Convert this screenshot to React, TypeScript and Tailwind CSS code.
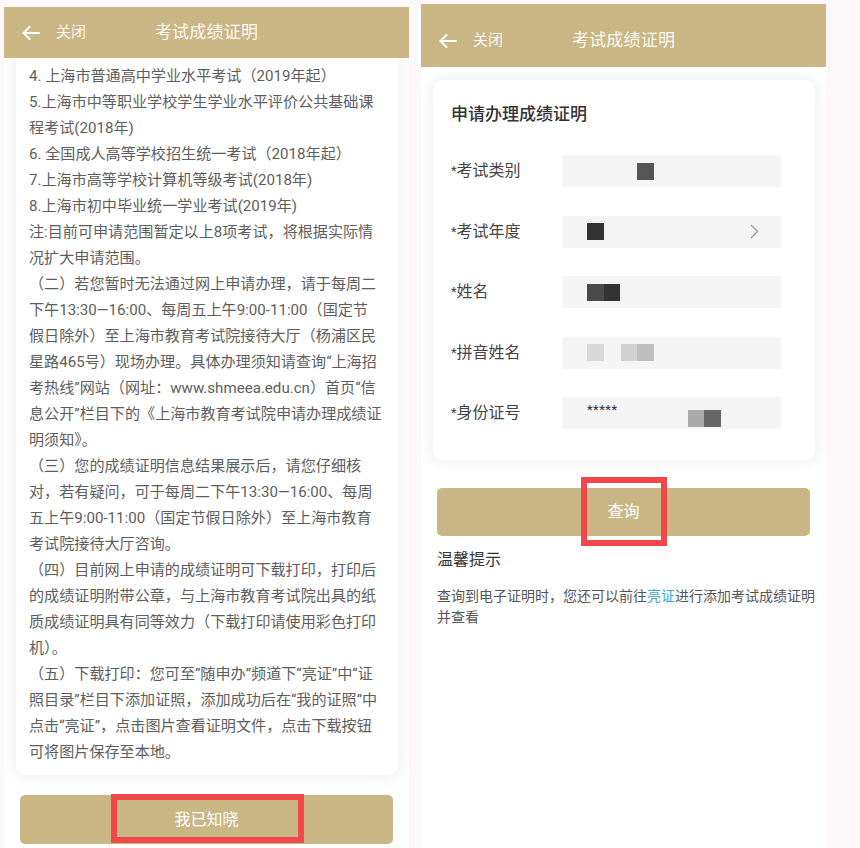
import React from "react";

const leftLines: string[] = [
  "4. 上海市普通高中学业水平考试（2019年起）",
  "5.上海市中等职业学校学生学业水平评价公共基础课",
  "程考试(2018年)",
  "6. 全国成人高等学校招生统一考试（2018年起）",
  "7.上海市高等学校计算机等级考试(2018年)",
  "8.上海市初中毕业统一学业考试(2019年)",
  "注:目前可申请范围暂定以上8项考试，将根据实际情",
  "况扩大申请范围。",
  "（二）若您暂时无法通过网上申请办理，请于每周二",
  "下午13:30—16:00、每周五上午9:00-11:00（国定节",
  "假日除外）至上海市教育考试院接待大厅（杨浦区民",
  "星路465号）现场办理。具体办理须知请查询“上海招",
  "考热线”网站（网址：www.shmeea.edu.cn）首页“信",
  "息公开”栏目下的《上海市教育考试院申请办理成绩证",
  "明须知》。",
  "（三）您的成绩证明信息结果展示后，请您仔细核",
  "对，若有疑问，可于每周二下午13:30—16:00、每周",
  "五上午9:00-11:00（国定节假日除外）至上海市教育",
  "考试院接待大厅咨询。",
  "（四）目前网上申请的成绩证明可下载打印，打印后",
  "的成绩证明附带公章，与上海市教育考试院出具的纸",
  "质成绩证明具有同等效力（下载打印请使用彩色打印",
  "机）。",
  "（五）下载打印：您可至“随申办”频道下“亮证”中“证",
  "照目录”栏目下添加证照，添加成功后在“我的证照”中",
  "点击“亮证”，点击图片查看证明文件，点击下载按钮",
  "可将图片保存至本地。",
];

function BackArrow() {
  return (
    <svg width="18" height="14" viewBox="0 0 18 14" fill="none" stroke="white" strokeWidth="2" strokeLinecap="round" strokeLinejoin="round">
      <path d="M17 7H1.5" />
      <path d="M7.5 1L1.5 7l6 6" />
    </svg>
  );
}

function Header({ tall }: { tall?: boolean }) {
  return (
    <div
      className={
        "relative z-10 grid grid-cols-[1fr_auto_1fr] items-center px-[18px] bg-[#cbb686] text-white " +
        (tall ? "h-[63px] pt-[10px]" : "h-[51px]")
      }
    >
      <div className="flex items-center gap-[16px]">
        <BackArrow />
        <span className="text-[15px] leading-none opacity-90">关闭</span>
      </div>
      <div className="text-[17px] leading-none tracking-[0.2px] text-white/95">考试成绩证明</div>
      <div />
    </div>
  );
}

function Sq({ c, w = 17 }: { c: string; w?: number }) {
  return <div className={"h-[17px] " + c} style={{ width: w }} />;
}

function Row({ label, children, alignStart }: { label: string; children?: React.ReactNode; alignStart?: boolean }) {
  return (
    <div className="h-[60.5px] flex items-center">
      <div className="w-[111px] text-[16px] text-[#444] leading-none whitespace-nowrap">
        <span className="text-[13px] align-top relative top-[1px]">*</span>
        {label}
      </div>
      <div
        className={
          "w-[219px] h-[32px] bg-[#f5f5f5] flex pl-[25px] pr-[22px] " +
          (alignStart ? "items-start" : "items-center")
        }
      >
        {children}
      </div>
    </div>
  );
}

export default function App() {
  return (
    <div className="w-[860px] h-[848px] overflow-hidden bg-[#fdf9fa] flex items-start font-['Roboto','Noto_Sans_CJK_SC',sans-serif]">
      {/* Left phone */}
      <div className="ml-[4px] mt-[7px] w-[405px] h-[841px] bg-white flex flex-col">
        <Header />
        <div className="ml-3 mr-[11px] bg-white rounded-b-[10px] shadow-[0_0_14px_4px_rgba(0,0,0,0.05)] pt-[5px] pb-[10px] pl-[13px] text-[15.1px] leading-[26px] text-[#5e5e5e]">
          {leftLines.map((l, i) => (
            <div key={i} className="whitespace-nowrap">
              {l}
            </div>
          ))}
        </div>
        <div className="relative mt-[20px] mx-4 h-[49px] rounded-[5px] bg-[#cbb686] flex items-center justify-center text-white text-[16px]">
          我已知晓
          <div className="absolute left-[91px] top-[-1px] w-[193px] h-[49px] border-[6px] border-[#f2474b]" />
        </div>
      </div>

      {/* Right phone */}
      <div className="ml-[12px] mt-[4px] w-[405px] h-[844px] bg-white flex flex-col">
        <Header tall />
        <div className="mt-[13px] ml-3 mr-[11px] bg-white rounded-[10px] shadow-[0_0_14px_4px_rgba(0,0,0,0.05)] pt-[22px] pb-[16.5px] px-[18px]">
          <div className="text-[17px] leading-[24px] font-medium text-[#333] mb-[15px]">申请办理成绩证明</div>
          <Row label="考试类别">
            <div className="ml-[50px]">
              <Sq c="bg-[#555]" />
            </div>
          </Row>
          <Row label="考试年度">
            <Sq c="bg-[#333]" />
            <div className="flex-1" />
            <svg width="9" height="15" viewBox="0 0 9 15" fill="none" stroke="#9a9a9a" strokeWidth="1.3" strokeLinecap="round" strokeLinejoin="round">
              <path d="M1.5 1.5l6 6-6 6" />
            </svg>
          </Row>
          <Row label="姓名">
            <Sq c="bg-[#4a4a4a]" />
            <Sq c="bg-[#333]" w={16} />
          </Row>
          <Row label="拼音姓名">
            <Sq c="bg-[#d9d9d9]" />
            <div className="w-[17px]" />
            <Sq c="bg-[#d2d2d2]" w={16} />
            <Sq c="bg-[#bebebe]" />
          </Row>
          <Row label="身份证号" alignStart>
            <span className="inline-block w-[101px] mt-[6px] text-[13px] leading-[14px] text-[#333] tracking-[0.5px]">*****</span>
            <div className="mt-[13px] flex">
              <Sq c="bg-[#ababab]" w={16} />
              <Sq c="bg-[#666]" />
            </div>
          </Row>
        </div>
        <div className="relative mt-[28px] mx-4 h-[48px] rounded-[5px] bg-[#cbb686] flex items-center justify-center text-white text-[16px]">
          查询
          <div className="absolute left-[144px] top-[-11px] w-[86px] h-[69px] border-[6px] border-[#f2474b]" />
        </div>
        <div className="mx-4 mt-[12px] text-[16px] leading-[24px] text-[#333]">温馨提示</div>
        <div className="mx-4 mt-[13.5px] text-[14px] leading-[21px] text-[#555] whitespace-nowrap">
          查询到电子证明时，您还可以前往<span className="text-[#3fa6d2]">亮证</span>进行添加考试成绩证明
          <br />
          并查看
        </div>
      </div>
    </div>
  );
}
